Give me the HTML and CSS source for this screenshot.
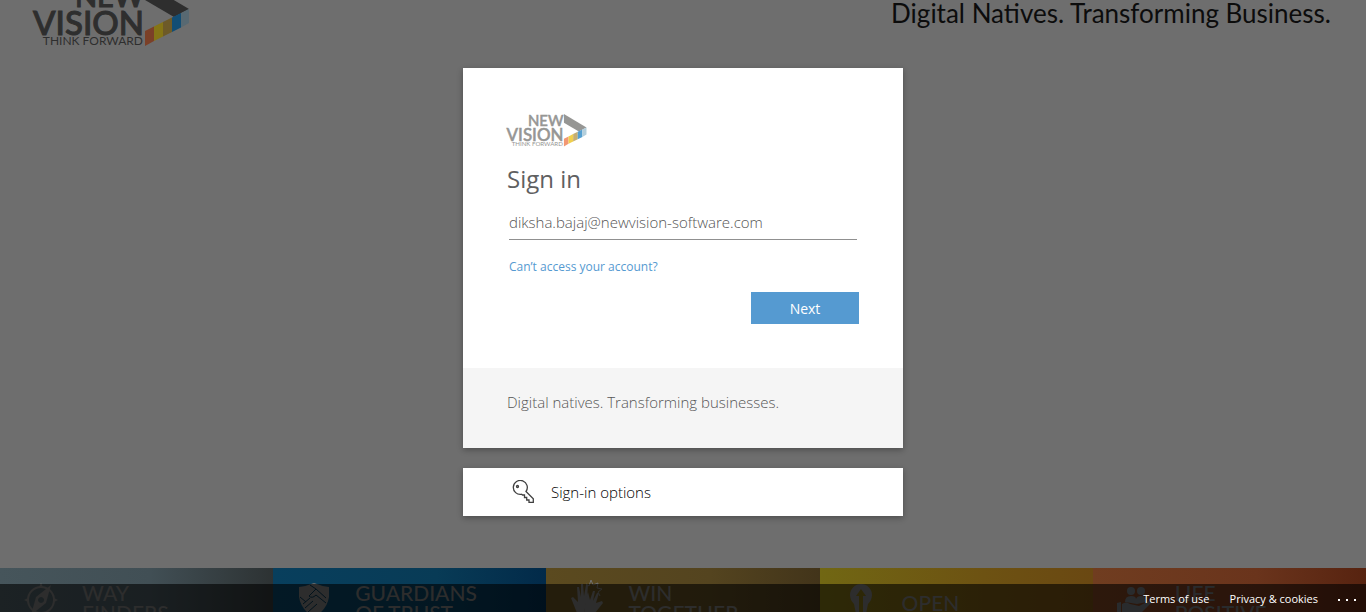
FILE: index.html
```html
<!DOCTYPE html>
<html lang="en">
<head>
<meta charset="utf-8">
<meta name="viewport" content="width=device-width, initial-scale=1">
<title>Sign in to your account</title>
<link rel="stylesheet" href="styles.css">
</head>
<body>
<svg class="defs" width="0" height="0" aria-hidden="true">
  <symbol id="logo" viewBox="0 0 156 64" overflow="visible">
    <g class="logo-letters">
      <text class="logo-word logo-new" x="110" y="25" text-anchor="end">NEW</text>
      <text class="logo-word" x="110" y="53" text-anchor="end">VISION</text>
      <text class="logo-tag" x="109" y="63" text-anchor="end">THINK FORWARD</text>
    </g>
    <path class="logo-letters" d="M111 1L155 27L140 35L111 18Z"/>
    <path class="logo-orange" d="M111 49L120 44.500V59L111 64Z"/>
    <path class="logo-yellow" d="M120 44.500L129 40V54.500L120 59Z"/>
    <path class="logo-tan" d="M129 40L138 35.500V50L129 54.500Z"/>
    <path class="logo-blue" d="M138 35.500L147 31V45.500L138 50Z"/>
    <path class="logo-pale" d="M147 31L155 27V41L147 45.500Z"/>
  </symbol>
</svg>

<div class="backdrop" aria-hidden="true">
  <div class="banner">
    <svg class="banner-logo"><use href="#logo"/></svg>
    <p class="slogan">Digital Natives. Transforming Business.</p>
  </div>
  <div class="values">
    <div class="value way">
      <svg class="value-icon" viewBox="0 0 34 34">
        <circle cx="17" cy="17" r="13" fill="none" stroke="currentColor" stroke-width="2"/>
        <path d="M17 0l2 4h-4zM0 17l4-2v4zM34 17l-4-2v4zM17 34l2-4h-4z"/>
        <path fill-rule="evenodd" d="M27 2L22 20L7 32L12 14ZM17 14a3 3 0 1 0 .1 0Z"/>
      </svg>
      <span>WAY<br>FINDERS</span>
    </div>
    <div class="value trust">
      <svg class="value-icon" viewBox="0 0 34 34">
        <path d="M2 4Q10 3 17 0Q24 3 32 4V14Q30 27 17 34Q4 27 2 14Z"/>
        <path class="cut" d="M13 2L19 6L29 15M19 6L12 13Q15 16 19 12L29 20M3 14L9 19M6 21L13 15M8 25L16 18M11 29L20 21"/>
      </svg>
      <span>GUARDIANS<br>OF TRUST</span>
    </div>
    <div class="value win">
      <svg class="value-icon raised" viewBox="0 0 34 34">
        <path d="M7 33L1 18L3 17L8 22L7 7H9L11 17L11 4H13L14 16L16 5H18L17 19L14 33Z"/>
        <path d="M14 33L16 17L18 12L20 20L23 11H25L23 21L27 13H29L26 23L32 21L33 23L25 33Z"/>
        <path class="spark" d="M16 4L19 6L21 0L23 5L28 3L27 8L32 9L28 12L30 16"/>
      </svg>
      <span>WIN<br>TOGETHER</span>
    </div>
    <div class="value open">
      <svg class="value-icon" viewBox="0 0 34 34">
        <path fill-rule="evenodd" d="M17 0A11 11 0 0 0 6 11Q6 16 10 20L12 30H22L24 20Q28 16 28 11A11 11 0 0 0 17 0ZM17 5L22 12H19V30H15V12H12Z"/>
      </svg>
      <span>OPEN</span>
    </div>
    <div class="value life">
      <svg class="value-icon" viewBox="0 0 34 34">
        <circle cx="14" cy="8" r="4"/><circle cx="24" cy="8" r="4"/>
        <path d="M8 19Q8 13 14 13Q19 13 19 16Q20 13 24 13Q30 13 30 19L20 21ZM0 20L4 19V32H0ZM5 21Q9 18 13 21L22 23L32 18L34 20L24 30H5Z"/>
      </svg>
      <span>LIFE<br>POSITIVE</span>
    </div>
  </div>
</div>

<main class="page">
  <section class="card">
    <form class="card-body">
      <svg class="card-logo" role="img" aria-label="New Vision, Think Forward"><use href="#logo"/></svg>
      <h1 id="title">Sign in</h1>
      <input class="account" type="email" aria-label="Email address" value="diksha.bajaj@newvision-software.com">
      <a class="help" href="#">Can’t access your account?</a>
      <button class="next" type="button">Next</button>
    </form>
    <p class="note">Digital natives. Transforming businesses.</p>
  </section>
  <button class="options" type="button">
    <svg class="key" viewBox="0 0 24 24" aria-hidden="true">
      <path d="M15 11.500L22.300 18.800V22.300H18V20H15.700V17.500H13.500V15H11.500L10.600 14.300A7 7 0 1 1 15 11.500Z"/>
      <circle cx="6.500" cy="6.500" r="1"/>
    </svg>
    <span>Sign-in options</span>
  </button>
</main>

<footer class="footer">
  <a href="#">Terms of use</a>
  <a href="#">Privacy &amp; cookies</a>
  <button class="more" type="button" aria-label="More options"><i></i><i></i><i></i></button>
</footer>
</body>
</html>
```

FILE: styles.css
```css
* { box-sizing: border-box; }

body {
  margin: 0;
  min-height: 100vh;
  display: flex;
  flex-direction: column;
  background: #6e6e6e;
  font-family: "Open Sans", "Noto Sans", sans-serif;
  font-size: 15px;
  line-height: 20px;
}

.defs { position: absolute; }

/* Branded background */
.backdrop {
  position: absolute;
  inset: 0;
  overflow: hidden;
  display: flex;
  flex-direction: column;
  justify-content: space-between;
  font-family: Lato, sans-serif;
}

.banner {
  display: flex;
  justify-content: space-between;
  align-items: flex-end;
  margin-top: -19px;
  padding: 0 35px 0 34px;
}

.banner-logo {
  width: 156px;
  height: 66px;
  overflow: visible;
  color: #2e2e2e;
  --orange: #7b4028;
  --yellow: #857516;
  --tan: #6d5a28;
  --blue: #124e75;
  --pale: #586972;
}

.slogan {
  margin: 0 0 18px;
  color: #0c0c0c;
  font-size: 26px;
  line-height: 32px;
}

.logo-letters { fill: currentColor; font-family: Lato, sans-serif; }
.logo-word { font-size: 33px; font-weight: 500; stroke: currentColor; stroke-width: 1; }
.logo-new { font-size: 29px; }
.logo-tag { font-size: 12px; font-weight: 400; }
.logo-orange { fill: var(--orange); }
.logo-yellow { fill: var(--yellow); }
.logo-tan { fill: var(--tan); }
.logo-blue { fill: var(--blue); }
.logo-pale { fill: var(--pale); }

.values {
  display: grid;
  grid-template-columns: repeat(5, 1fr);
  height: 44px;
}

.value {
  display: flex;
  align-items: flex-start;
  gap: 24px;
  padding: 15px 0 0 24px;
  color: #707070;
  font-size: 21px;
  font-weight: 500;
  line-height: 20px;
}

.value-icon {
  flex: none;
  width: 34px;
  height: 34px;
  fill: currentColor;
}

.raised { margin-top: -3px; }
.cut { fill: none; stroke: #052f47; stroke-width: 1; }
.spark { fill: none; stroke: currentColor; stroke-width: 1; }

.way { background: linear-gradient(90deg, #46555b, #414f55 55%, #2d3233); }
.trust { background: linear-gradient(90deg, #083f5d, #083b56 60%, #022a49); }
.win { background: linear-gradient(90deg, #5b4a1f, #54441f 60%, #42341a); }
.open { background: linear-gradient(90deg, #716713, #6d5212 60%, #6a4812); padding-top: 25px; }
.open .value-icon { margin-top: -9px; }
.life { background: linear-gradient(90deg, #703d20, #6a341c 60%, #572310); color: #666d72; }

/* Sign-in panel */
.page {
  position: relative;
  flex: 1;
  width: 100%;
  max-width: 440px;
  margin: 0 auto;
  padding: 68px 0 64px;
}

.card {
  background: #fff;
  box-shadow: 0 2px 6px rgba(0, 0, 0, .3);
}

.card-body {
  display: flex;
  flex-direction: column;
  align-items: flex-start;
  padding: 44px;
}

.card-logo {
  width: 80px;
  height: 36px;
  overflow: visible;
  color: #969694;
  --orange: #f29874;
  --yellow: #f0cf4e;
  --tan: #c5ae72;
  --blue: #559fd0;
  --pale: #b4cfdc;
}

h1 {
  margin: 15px 0 12px;
  color: #5f6061;
  font-size: 24px;
  font-weight: 500;
  line-height: 32px;
}

.account {
  align-self: stretch;
  height: 33px;
  margin: 0 2px;
  padding: 0 0 2px;
  border: 0;
  border-bottom: 1px solid #909090;
  background: none;
  color: #555;
  font: 300 15px/20px "Open Sans", sans-serif;
  outline: 0;
}

.help {
  margin: 17px 2px 15px;
  color: #559ad1;
  font-size: 12px;
  text-decoration: none;
}

.next {
  align-self: flex-end;
  width: 108px;
  height: 32px;
  padding: 2px 0 0;
  border: 0;
  background: #559ad1;
  color: #fff;
  font: 500 14px/20px "Open Sans", sans-serif;
}

.note {
  margin: 0;
  padding: 24px 44px 36px;
  background: #f5f5f5;
  color: #555;
  font-weight: 300;
}

.options {
  display: flex;
  align-items: center;
  gap: 16px;
  width: 100%;
  height: 48px;
  margin-top: 20px;
  padding: 0 48px;
  border: 0;
  background: #fff;
  box-shadow: 0 2px 6px rgba(0, 0, 0, .3);
  color: #000;
  font: 300 15px/20px "Open Sans", sans-serif;
}

.key { width: 24px; height: 24px; fill: none; stroke: #404040; stroke-width: 1.3; }

/* Page footer */
.footer {
  position: relative;
  display: flex;
  justify-content: flex-end;
  align-items: center;
  gap: 20px;
  height: 28px;
  margin-top: -28px;
  padding: 2px 10px 0 0;
  background: rgba(0, 0, 0, .6);
}

.footer a {
  color: #fff;
  font-size: 11px;
  font-weight: 500;
  text-decoration: none;
}

.more {
  display: flex;
  gap: 6px;
  padding: 6px 0 4px;
  border: 0;
  background: none;
}

.more i { width: 2px; height: 2px; background: #fff; }
```
